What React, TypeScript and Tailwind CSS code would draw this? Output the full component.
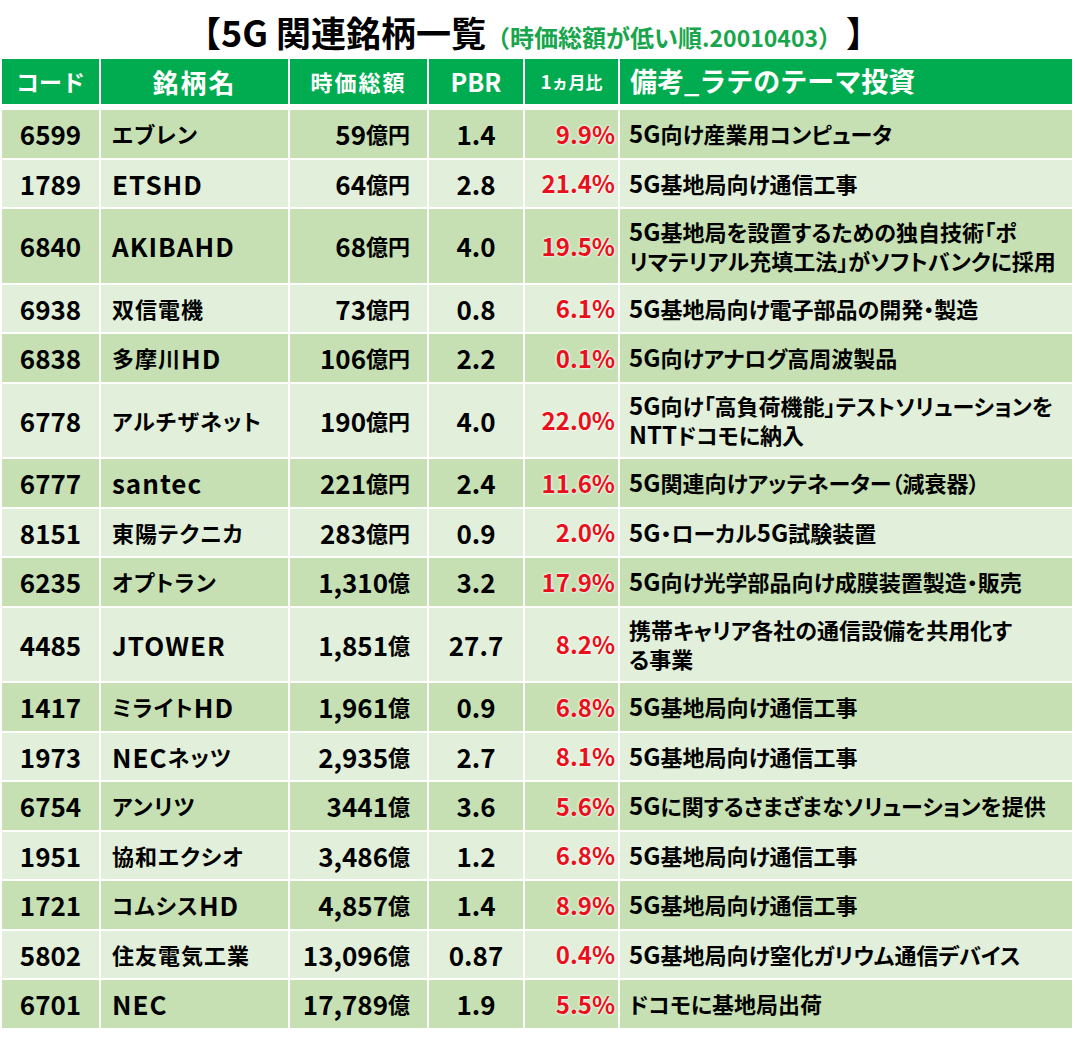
import React from "react";

type Row = {
  code: string;
  name: string;
  cap: string;
  pbr: string;
  pct: string;
  note: string[];
};

const rows: Row[] = [
  { code: "6599", name: "エブレン", cap: "59億円", pbr: "1.4", pct: "9.9%", note: ["5G向け産業用コンピュータ"] },
  { code: "1789", name: "ETSHD", cap: "64億円", pbr: "2.8", pct: "21.4%", note: ["5G基地局向け通信工事"] },
  {
    code: "6840",
    name: "AKIBAHD",
    cap: "68億円",
    pbr: "4.0",
    pct: "19.5%",
    note: ["5G基地局を設置するための独自技術「ポ", "リマテリアル充填工法」がソフトバンクに採用"],
  },
  { code: "6938", name: "双信電機", cap: "73億円", pbr: "0.8", pct: "6.1%", note: ["5G基地局向け電子部品の開発・製造"] },
  { code: "6838", name: "多摩川HD", cap: "106億円", pbr: "2.2", pct: "0.1%", note: ["5G向けアナログ高周波製品"] },
  {
    code: "6778",
    name: "アルチザネット",
    cap: "190億円",
    pbr: "4.0",
    pct: "22.0%",
    note: ["5G向け「高負荷機能」テストソリューションを", "NTTドコモに納入"],
  },
  { code: "6777", name: "santec", cap: "221億円", pbr: "2.4", pct: "11.6%", note: ["5G関連向けアッテネーター（減衰器）"] },
  { code: "8151", name: "東陽テクニカ", cap: "283億円", pbr: "0.9", pct: "2.0%", note: ["5G・ローカル5G試験装置"] },
  { code: "6235", name: "オプトラン", cap: "1,310億", pbr: "3.2", pct: "17.9%", note: ["5G向け光学部品向け成膜装置製造・販売"] },
  {
    code: "4485",
    name: "JTOWER",
    cap: "1,851億",
    pbr: "27.7",
    pct: "8.2%",
    note: ["携帯キャリア各社の通信設備を共用化す", "る事業"],
  },
  { code: "1417", name: "ミライトHD", cap: "1,961億", pbr: "0.9", pct: "6.8%", note: ["5G基地局向け通信工事"] },
  { code: "1973", name: "NECネッツ", cap: "2,935億", pbr: "2.7", pct: "8.1%", note: ["5G基地局向け通信工事"] },
  { code: "6754", name: "アンリツ", cap: "3441億", pbr: "3.6", pct: "5.6%", note: ["5Gに関するさまざまなソリューションを提供"] },
  { code: "1951", name: "協和エクシオ", cap: "3,486億", pbr: "1.2", pct: "6.8%", note: ["5G基地局向け通信工事"] },
  { code: "1721", name: "コムシスHD", cap: "4,857億", pbr: "1.4", pct: "8.9%", note: ["5G基地局向け通信工事"] },
  { code: "5802", name: "住友電気工業", cap: "13,096億", pbr: "0.87", pct: "0.4%", note: ["5G基地局向け窒化ガリウム通信デバイス"] },
  { code: "6701", name: "NEC", cap: "17,789億", pbr: "1.9", pct: "5.5%", note: ["ドコモに基地局出荷"] },
];

function Mixed({ s, latin }: { s: string; latin: string }) {
  const parts = s.split(/([\x20-\x7E]+)/).filter((p) => p.length > 0);
  return (
    <>
      {parts.map((p, i) =>
        /^[\x20-\x7E]+$/.test(p) ? (
          <span key={i} className={latin}>
            {p}
          </span>
        ) : (
          <span key={i}>{p}</span>
        )
      )}
    </>
  );
}

const cols = "grid grid-cols-[97px_187px_137px_94px_93px_452px] gap-x-[2px]";
const LAT = "text-[26px]";

export default function App() {
  return (
    <div
      className="w-[1075px] h-[1039px] bg-white text-black font-bold overflow-hidden"
      style={{ fontFamily: '"Noto Sans CJK JP", "Noto Sans", sans-serif' }}
    >
      {/* title */}
      <div className="h-[59px] flex items-center justify-center pr-[8px] pt-[2px]">
        <div className="flex items-baseline whitespace-nowrap leading-none">
          <span className="text-[35px]">【</span>
          <span className="text-[36px]">5G</span>
          <span className="text-[35px] ml-[8px]">関連銘柄一覧</span>
          <span className="text-[24px] text-[#17a64c]">
            （時価総額が低い順<span className="text-[23px]">.20010403</span>）
          </span>
          <span className="text-[35px] ml-[4px]">】</span>
        </div>
      </div>

      <div className="ml-[2px] w-[1070px]">
        {/* header */}
        <div className={`${cols} h-[45px] text-white`}>
          <div className="bg-[#00ac4f] flex items-center justify-center text-[23px]">コード</div>
          <div className="bg-[#00ac4f] flex items-center justify-center text-[26px] tracking-[2px]">銘柄名</div>
          <div className="bg-[#00ac4f] flex items-center justify-center text-[22px] tracking-[2px]">時価総額</div>
          <div className="bg-[#00ac4f] flex items-center justify-center text-[25px]">PBR</div>
          <div className="bg-[#00ac4f] flex items-center justify-center text-[17px]">
            <span className="text-[19px]">1</span>ヵ月比
          </div>
          <div className="bg-[#00ac4f] flex items-center pl-[10px] text-[27px]">備考_ラテのテーマ投資</div>
        </div>

        {/* body */}
        <div className="mt-[6px] flex flex-col gap-y-[2px] [font-feature-settings:'palt']">
          {rows.map((r, i) => {
            const bg = i % 2 === 0 ? "bg-[#c6e0b4]" : "bg-[#e2efda]";
            const h = r.note.length > 1 ? "h-[73.5px]" : "h-[47.5px]";
            return (
              <div key={r.code + i} className={`${cols} ${h} text-[22px]`}>
                <div className={`${bg} flex items-center justify-center`}>
                  <span className={LAT}>{r.code}</span>
                </div>
                <div className={`${bg} flex items-center pl-[11px] whitespace-nowrap tracking-[1px]`}>
                  <Mixed s={r.name} latin={LAT} />
                </div>
                <div className={`${bg} flex items-center justify-end pr-[17px] whitespace-nowrap`}>
                  <Mixed s={r.cap} latin={LAT} />
                </div>
                <div className={`${bg} flex items-center justify-center`}>
                  <span className={LAT}>{r.pbr}</span>
                </div>
                <div className={`${bg} flex items-center justify-end pr-[3px]`}>
                  <span className="text-[24px] text-[#e8101a] [text-shadow:0_0_2px_#ffffff,0_0_3px_#ffffff]">
                    {r.pct}
                  </span>
                </div>
                <div className={`${bg} flex flex-col justify-center pl-[9px] whitespace-nowrap overflow-hidden`}>
                  {r.note.map((n, j) => (
                    <div key={j} className="h-[29px] leading-[29px]">
                      <Mixed s={n} latin="inline-block leading-none text-[24px]" />
                    </div>
                  ))}
                </div>
              </div>
            );
          })}
        </div>
      </div>
    </div>
  );
}
